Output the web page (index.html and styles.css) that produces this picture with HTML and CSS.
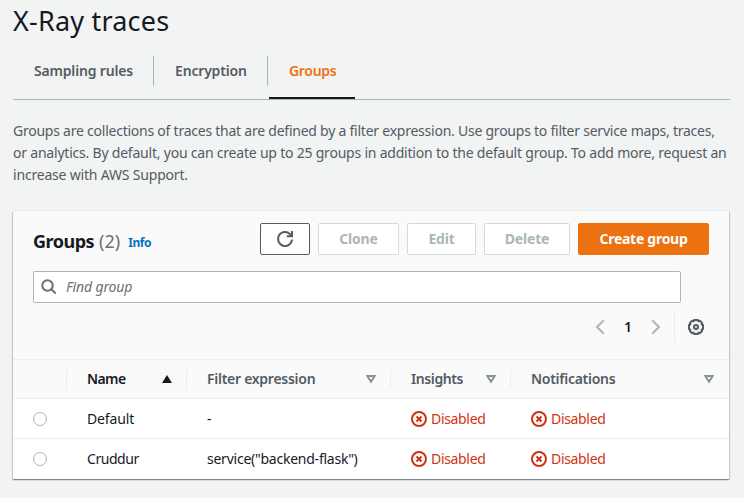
FILE: index.html
```html
<!DOCTYPE html>
<html lang="en">
<head>
<meta charset="utf-8">
<title>X-Ray traces</title>
<link rel="stylesheet" href="styles.css">
</head>
<body>
<svg class="defs" width="0" height="0">
  <symbol id="disabled" viewBox="0 0 16 16"><circle cx="8" cy="8" r="7"/><path d="M5.500 5.500l5 5M10.500 5.500l-5 5"/></symbol>
  <symbol id="sort" viewBox="0 0 10 8"><path d="M1.400 1h7.200L5 6.800z"/></symbol>
</svg>
<main class="page">
  <h1 class="title"><span>X-Ray traces</span></h1>
  <nav class="tabs">
    <a class="tab tab-rules"><span>Sampling rules</span></a>
    <a class="tab tab-encryption"><span>Encryption</span></a>
    <a class="tab tab-groups active"><span>Groups</span></a>
  </nav>
  <p class="intro"><span class="line l1">Groups are collections of traces that are defined by a filter expression. Use groups to filter service maps, traces,</span> <span class="line l2">or analytics. By default, you can create up to 25 groups in addition to the default group. To add more, request an</span> <span class="line l3">increase with AWS Support.</span></p>
  <section class="card">
    <header class="card-head">
      <h2 class="heading">Groups</h2><span class="count">(2)</span><a class="info">Info</a>
      <div class="actions">
        <button class="btn refresh" aria-label="Refresh"><svg width="18" height="18" viewBox="0 0 18 18"><path d="M16 9.500A7 7 0 1 1 14 4.100L15.700 5.700"/><path d="M16 1v5.200h-5.200"/></svg></button>
        <button class="btn clone" disabled>Clone</button>
        <button class="btn edit" disabled>Edit</button>
        <button class="btn delete" disabled>Delete</button>
        <button class="btn primary">Create group</button>
      </div>
    </header>
    <div class="search">
      <svg width="16" height="16" viewBox="0 0 16 16"><circle cx="6.500" cy="6.500" r="5.200"/><path d="M10.300 10.300l4.400 4.200"/></svg>
      <span>Find group</span>
    </div>
    <div class="pager">
      <svg class="arrow" width="10" height="16" viewBox="0 0 10 16"><path d="M8.800 1.200L2 8l6.800 6.800"/></svg>
      <b>1</b>
      <svg class="arrow" width="10" height="16" viewBox="0 0 10 16"><path d="M1.200 1.200L8 8l-6.800 6.800"/></svg>
      <div class="settings"><svg width="18" height="18" viewBox="0 0 18 18"><path d="M7.200 2h3.600l.7 1.300 1.500-.4 2.100 2.100-.4 1.500 1.300.7v3.600l-1.300.7.4 1.500-2.100 2.100-1.500-.4-.7 1.300H7.200l-.7-1.300-1.500.4L2.900 13l.4-1.500L2 10.800V7.200l1.300-.7L2.900 5 5 2.900l1.500.4z"/><circle cx="9" cy="9" r="2"/></svg></div>
    </div>
    <div class="row head">
      <div></div>
      <div class="cell sorted"><span class="t-name">Name</span><svg width="12" height="10" viewBox="0 0 12 10"><path class="fill" d="M6 1l5 8H1z"/></svg></div>
      <div class="cell"><span class="t-filter">Filter expression</span><svg width="10" height="8"><use href="#sort"/></svg></div>
      <div class="cell"><span class="t-insights">Insights</span><svg width="10" height="8"><use href="#sort"/></svg></div>
      <div class="cell"><span class="t-notif">Notifications</span><svg width="10" height="8"><use href="#sort"/></svg></div>
    </div>
    <div class="row">
      <div class="pick"><i class="radio"></i></div>
      <div class="cell"><span class="t-default">Default</span></div>
      <div class="cell"><span>-</span></div>
      <div class="cell status"><svg width="16" height="16"><use href="#disabled"/></svg><span>Disabled</span></div>
      <div class="cell status"><svg width="16" height="16"><use href="#disabled"/></svg><span>Disabled</span></div>
    </div>
    <div class="row">
      <div class="pick"><i class="radio"></i></div>
      <div class="cell"><span class="t-cruddur">Cruddur</span></div>
      <div class="cell"><span class="t-service">service("backend-flask")</span></div>
      <div class="cell status"><svg width="16" height="16"><use href="#disabled"/></svg><span>Disabled</span></div>
      <div class="cell status"><svg width="16" height="16"><use href="#disabled"/></svg><span>Disabled</span></div>
    </div>
  </section>
</main>
</body>
</html>
```
FILE: styles.css
```css
* { box-sizing: border-box; }
body { margin: 0; height: 498px; overflow: hidden; background: #f2f3f3; color: #16191f; font: 14px/22px "Noto Sans", sans-serif; }
svg { fill: none; stroke: currentColor; flex: none; display: block; }
.defs { position: absolute; }
.page { padding: 0 15px 0 13px; }
.title { margin: 0; height: 56px; padding-top: 3px; font-size: 27px; line-height: 36px; font-weight: 400; letter-spacing: .2px; }
.tabs { display: flex; height: 44px; border-bottom: 1px solid #aab7b8; margin-right: -1px; }
.tab { height: 30px; line-height: 30px; padding-left: 21px; font-weight: 600; color: #545b64; border-right: 1px solid #aab7b8; white-space: nowrap; letter-spacing: -.18px; }
.tab-rules { width: 141px; }
.tab-encryption { width: 114px; }
.tab-groups { width: 86px; margin-left: 1px; padding-left: 20px; height: 43px; border-right: 0; border-bottom: 2px solid #16191f; color: #ec7211; letter-spacing: -.3px; }
.intro { margin: 20px 0 25px; color: #545b64; }
.line { display: block; white-space: nowrap; }
.l1 { letter-spacing: -.238px; }
.l2 { letter-spacing: -.212px; }
.l3 { letter-spacing: -.19px; }
.card { height: 268px; background: linear-gradient(#fafafa 188px, #fff 188px); box-shadow: 0 1px 1px rgba(0,28,36,.3), 1px 1px 1px rgba(0,28,36,.15), -1px 1px 1px rgba(0,28,36,.15), 0 -1px 0 #e6e9e9; }
.card-head { display: flex; align-items: center; height: 60px; padding: 0 20px; white-space: nowrap; }
.heading { margin: 0; font-size: 18px; font-weight: 700; letter-spacing: -.5px; }
.count { font-size: 18px; margin-left: 5px; color: #687078; }
.info { font-size: 12px; font-weight: 700; color: #0073bb; margin: 4px 0 0 8px; letter-spacing: -.4px; }
.actions { display: flex; gap: 8px; margin-left: auto; margin-top: -5px; }
.btn { height: 32px; border: 1px solid #545b64; border-radius: 2px; background: #fff; color: #545b64; padding: 0; font: 700 14px/22px "Noto Sans", sans-serif; letter-spacing: -.2px; }
.btn:disabled { color: #aab7b8; border-color: #d5dbdb; }
.refresh { width: 50px; display: flex; align-items: center; justify-content: center; stroke-width: 2; }
.clone { width: 81px; }
.edit { width: 69px; }
.delete { width: 86px; }
.btn.primary { width: 131px; background: #ec7211; border-color: #ec7211; color: #fff; letter-spacing: -.27px; }
.search { display: flex; align-items: center; width: 648px; height: 32px; margin-left: 20px; border: 1px solid #aab7b8; border-radius: 2px; background: #fff; padding-left: 7px; gap: 9px; color: #687078; font-style: italic; letter-spacing: -.14px; }
.search svg { stroke-width: 2; }
.pager { display: flex; align-items: center; justify-content: flex-end; height: 32px; margin: 8px 24px 16px 0; }
.arrow { color: #aab7b8; stroke-width: 2; }
.pager b { width: 46px; text-align: center; font-weight: 600; }
.settings { display: flex; align-items: center; height: 32px; margin-left: 13px; padding-left: 12px; border-left: 1px solid #eaeded; color: #545b64; stroke-width: 2; }
.row { display: grid; grid-template-columns: 53px 120px 204px 120px 1fr; height: 40px; border-top: 1px solid #eaeded; align-items: center; }
.row.head { height: 39px; font-weight: 600; color: #545b64; }
.cell { display: flex; align-items: center; padding-left: 21px; white-space: nowrap; }
.head .cell { height: 19px; padding: 0 14px 0 20px; border-left: 1px solid #eaeded; justify-content: space-between; stroke-width: 2; }
.head .cell:last-child { padding-right: 15px; }
.head .cell svg { color: #879596; }
.head .sorted { color: #16191f; padding-right: 13px; }
.head .sorted svg { color: #16191f; }
.t-name { letter-spacing: -.6px; }
.t-filter { letter-spacing: -.27px; }
.t-insights { letter-spacing: -.4px; }
.t-notif { letter-spacing: -.27px; }
.t-default { letter-spacing: -.15px; }
.t-cruddur { letter-spacing: -.45px; }
.t-service { letter-spacing: -.24px; }
.fill { fill: currentColor; stroke: none; }
.radio { display: block; width: 14px; height: 14px; margin-left: 20px; border: 1px solid #aab7b8; border-radius: 50%; background: #fff; }
.status { color: #d13212; gap: 4px; stroke-width: 2; letter-spacing: -.33px; }
```
